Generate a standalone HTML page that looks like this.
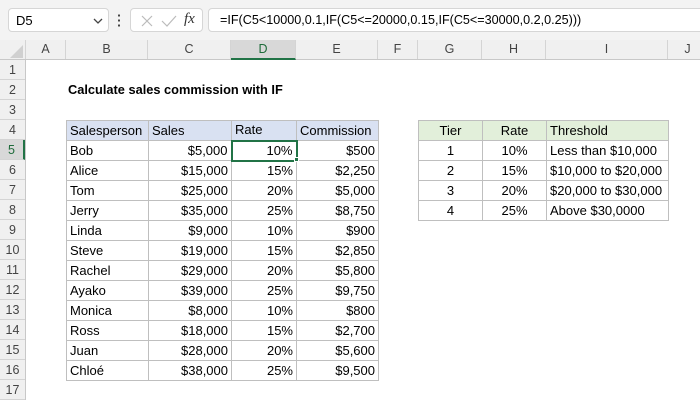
<!DOCTYPE html>
<html><head><meta charset="utf-8"><style>
*{margin:0;padding:0;box-sizing:border-box}
body{width:700px;height:400px;overflow:hidden;background:#fff;font-family:"Liberation Sans",Arial,sans-serif;font-size:12px;color:#000;position:relative}
.abs{position:absolute}
.top{left:0;top:0;width:700px;height:40px;background:#f3f3f3}
.box{background:#fff;border:1px solid #d6d6d6;border-radius:4px}
.colh{top:40px;height:20px;background:#f0f0f0;border-bottom:1px solid #c8c8c8;color:#444;font-size:12.5px}
.colh div{position:absolute;top:0;height:19px;line-height:19px;text-align:center;border-right:1px solid #d4d4d4}
.rowh{left:0;width:26px;background:#f0f0f0;border-right:1px solid #c8c8c8;color:#444;font-size:12.5px}
.rowh div{height:20px;line-height:20px;text-align:center;border-bottom:1px solid #d4d4d4}
table{border-collapse:collapse;position:absolute;table-layout:fixed}
td{border:1px solid #bfbfbf;height:20px;padding:0 3px;white-space:nowrap;font-size:13px;line-height:18px}
.r{text-align:right}.c{text-align:center}
.bh td{background:#d9e1f2}
.gh td{background:#e2efda}
</style></head><body>
<div class="abs top"></div>
<div class="abs box" style="left:8px;top:8px;width:101px;height:24px;"><span class="abs" style="left:7px;top:4px;font-size:13px">D5</span>
<svg class="abs" style="left:84px;top:9px" width="10" height="6"><path d="M1 1L5 5L9 1" stroke="#444" fill="none" stroke-width="1.3"/></svg></div>
<div class="abs" style="left:118px;top:13px;width:2px;height:14px;background:radial-gradient(circle,#444 1px,transparent 1.3px) 0 0/2px 5px"></div>
<div class="abs box" style="left:130px;top:8px;width:73px;height:24px;">
<svg class="abs" style="left:9px;top:5px" width="14" height="14"><path d="M2 2L12 12M12 2L2 12" stroke="#bbb" stroke-width="1.2"/></svg>
<svg class="abs" style="left:30px;top:5px" width="16" height="14"><path d="M1 7L6 12L15 2" stroke="#bbb" fill="none" stroke-width="1.2"/></svg>
<span class="abs" style="left:53px;top:2px;font-family:'Liberation Serif',serif;font-style:italic;font-size:15px;color:#333">fx</span></div>
<div class="abs box" style="left:208px;top:8px;width:500px;height:24px;"><span class="abs" style="left:11px;top:4px;font-size:12.6px">=IF(C5&lt;10000,0.1,IF(C5&lt;=20000,0.15,IF(C5&lt;=30000,0.2,0.25)))</span></div>

<div class="abs colh" style="left:0;width:700px">
<div style="left:0;width:26px"><svg class="abs" style="left:10px;top:5px" width="13" height="13"><path d="M13 0L13 13L0 13Z" fill="#d0d0d0"/></svg></div>
<div style="left:26px;width:40px">A</div>
<div style="left:66px;width:82px">B</div>
<div style="left:148px;width:83px">C</div>
<div style="left:231px;width:65px;background:#d8d8d8;color:#1e6b3a;border-bottom:2px solid #217346;height:20px">D</div>
<div style="left:296px;width:82px">E</div>
<div style="left:378px;width:40px">F</div>
<div style="left:418px;width:64px">G</div>
<div style="left:482px;width:64px">H</div>
<div style="left:546px;width:122px">I</div>
<div style="left:668px;width:40px">J</div>
</div>
<div class="abs rowh" style="top:60px;height:340px">
<div>1</div><div>2</div><div>3</div><div>4</div><div style="background:#d8d8d8;color:#1e6b3a;border-right:2px solid #217346">5</div><div>6</div><div>7</div><div>8</div><div>9</div><div>10</div><div>11</div><div>12</div><div>13</div><div>14</div><div>15</div><div>16</div><div>17</div>
</div>
<div class="abs" style="left:68px;top:81px;font-weight:bold;font-size:12.8px;line-height:18px">Calculate sales commission with IF</div>

<table style="left:66px;top:120px;width:312px">
<colgroup><col style="width:82px"><col style="width:83px"><col style="width:65px"><col style="width:82px"></colgroup>
<tr class="bh"><td>Salesperson</td><td>Sales</td><td>Rate</td><td>Commission</td></tr>
<tr><td>Bob</td><td class="r">$5,000</td><td class="r" style="border:2px solid #217346">10%</td><td class="r">$500</td></tr>
<tr><td>Alice</td><td class="r">$15,000</td><td class="r">15%</td><td class="r">$2,250</td></tr>
<tr><td>Tom</td><td class="r">$25,000</td><td class="r">20%</td><td class="r">$5,000</td></tr>
<tr><td>Jerry</td><td class="r">$35,000</td><td class="r">25%</td><td class="r">$8,750</td></tr>
<tr><td>Linda</td><td class="r">$9,000</td><td class="r">10%</td><td class="r">$900</td></tr>
<tr><td>Steve</td><td class="r">$19,000</td><td class="r">15%</td><td class="r">$2,850</td></tr>
<tr><td>Rachel</td><td class="r">$29,000</td><td class="r">20%</td><td class="r">$5,800</td></tr>
<tr><td>Ayako</td><td class="r">$39,000</td><td class="r">25%</td><td class="r">$9,750</td></tr>
<tr><td>Monica</td><td class="r">$8,000</td><td class="r">10%</td><td class="r">$800</td></tr>
<tr><td>Ross</td><td class="r">$18,000</td><td class="r">15%</td><td class="r">$2,700</td></tr>
<tr><td>Juan</td><td class="r">$28,000</td><td class="r">20%</td><td class="r">$5,600</td></tr>
<tr><td>Chloé</td><td class="r">$38,000</td><td class="r">25%</td><td class="r">$9,500</td></tr>
</table>
<div class="abs" style="left:294px;top:157px;width:5px;height:5px;background:#217346;border:1px solid #fff"></div>

<table style="left:418px;top:120px;width:250px">
<colgroup><col style="width:64px"><col style="width:64px"><col style="width:122px"></colgroup>
<tr class="gh"><td class="c">Tier</td><td class="c">Rate</td><td>Threshold</td></tr>
<tr><td class="c">1</td><td class="c">10%</td><td>Less than $10,000</td></tr>
<tr><td class="c">2</td><td class="c">15%</td><td>$10,000 to $20,000</td></tr>
<tr><td class="c">3</td><td class="c">20%</td><td>$20,000 to $30,000</td></tr>
<tr><td class="c">4</td><td class="c">25%</td><td>Above $30,0000</td></tr>
</table>
</body></html>
